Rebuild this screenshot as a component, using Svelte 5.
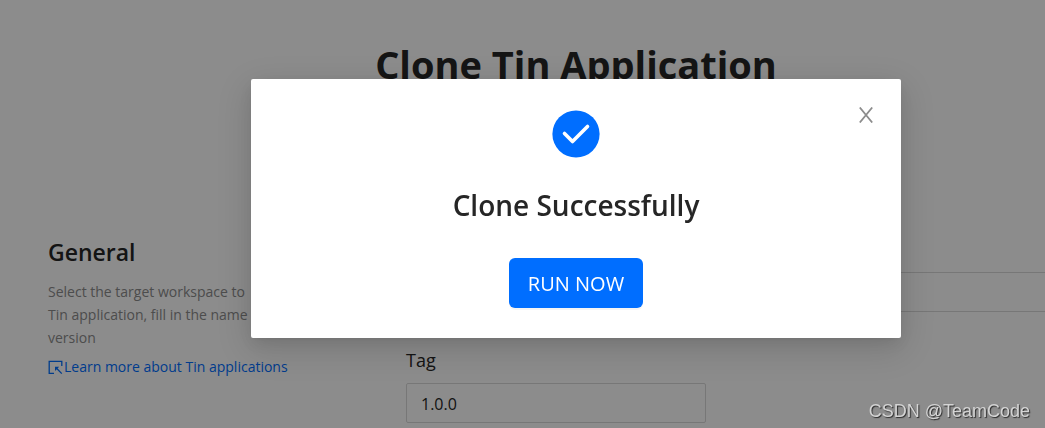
<script>
  let open = $state(true);
  let name = $state('');
  let tag = $state('1.0.0');

  const description = [
    'Select the target workspace to',
    'Tin application, fill in the name',
    'version'
  ];
</script>

<div class="page">
  <h1 class="page-title">Clone Tin Application</h1>

  <div class="section">
    <div class="intro">
      <h2 class="section-title" id="general">General</h2>
      <p class="description">
        {#each description as line}
          <span>{line}</span>
        {/each}
      </p>
      <a class="more" href="#learn-more">
        <svg width="15" height="15" viewBox="0 0 15 15" fill="none" stroke="currentColor" stroke-width="1.3">
          <path d="M6 13.3H1.2V1.3H13.8V6" />
          <path d="M13.8 13.6L8.5 8.3" />
          <path d="M7 6.8H11.2L7 11Z" fill="currentColor" stroke="none" />
        </svg>Learn more about Tin applications
      </a>
    </div>

    <form class="fields" onsubmit={(e) => e.preventDefault()}>
      <input class="wide" type="text" aria-labelledby="general" bind:value={name} />
      <label for="tag">Tag</label>
      <input id="tag" type="text" bind:value={tag} />
    </form>
  </div>
</div>

{#if open}
  <div class="mask">
    <div class="dialog" role="dialog" aria-modal="true" aria-labelledby="dialog-title">
      <button class="btn-close" onclick={() => (open = false)} aria-label="Close">
        <svg width="16" height="16" viewBox="0 0 16 16" fill="none" stroke="currentColor" stroke-width="1.8"><path d="M1.8 0.5L14.2 15.5M14.2 0.5L1.8 15.5" /></svg>
      </button>
      <svg class="check" width="48" height="48" viewBox="0 0 48 48" fill="none">
        <circle cx="24" cy="24" r="23.6" fill="#006eff" />
        <path d="M12.5 23.5L20.5 31.5L35.5 16.5" stroke="#fff" stroke-width="3.6" stroke-linecap="round" stroke-linejoin="round" />
      </svg>
      <h2 class="dialog-title" id="dialog-title">Clone Successfully</h2>
      <button class="btn-run" onclick={() => (open = false)}>RUN NOW</button>
    </div>
  </div>
{/if}

<div class="watermark">CSDN @TeamCode</div>

<style>
  :global(body) { background: #ffffff; overflow: hidden; }

  .page, .mask { font-family: 'Segoe UI', 'Open Sans', 'Noto Sans', sans-serif; color: #262626; }
  .page { height: 100vh; overflow: hidden; }
  h1, h2, p { margin: 0; }

  .page-title { padding: 36px 0 0 107px; font-size: 38px; font-weight: 700; line-height: 56px; text-align: center; }

  .section { display: grid; grid-template-columns: 310px minmax(0, 1fr); column-gap: 48px; margin-top: 142px; padding-left: 48px; }
  .section-title { font-size: 23px; font-weight: 600; line-height: 36px; }
  .description { margin-top: 10px; font-size: 14px; line-height: 23px; color: #8c8c8c; }
  .description span { display: block; white-space: nowrap; }
  .more { display: flex; align-items: center; gap: 1px; margin-top: 6px; font-size: 14px; line-height: 24px; color: #006eff; text-decoration: none; white-space: nowrap; }
  .more svg { flex-shrink: 0; }

  .fields { display: flex; flex-direction: column; align-items: flex-start; padding-top: 38px; }
  .fields label { margin-top: 32px; font-size: 18px; line-height: 32px; }
  input { width: 300px; height: 40px; box-sizing: border-box; padding: 5px 14px 3px; border: 1px solid #d9d9d9; border-radius: 2px; background: #ffffff; color: inherit; font-family: inherit; font-size: 16px; outline: none; }
  input:focus { border-color: #006eff; }
  #tag { margin-top: 7px; }
  .wide { width: calc(100% + 107px); }

  .mask { position: fixed; inset: 0; padding: 79px 37px 0 144px; background: rgba(0, 0, 0, 0.45); }
  .dialog { position: relative; display: flex; flex-direction: column; align-items: center; max-width: 650px; box-sizing: border-box; margin: 0 auto; padding: 31px 30px 30px; background: #ffffff; border-radius: 2px; box-shadow: 0 3px 6px -4px rgba(0, 0, 0, 0.12), 0 6px 16px 0 rgba(0, 0, 0, 0.08), 0 10px 36px 6px rgba(0, 0, 0, 0.12); }
  .dialog-title { margin-top: 27px; font-size: 28px; font-weight: 600; line-height: 40px; }
  .check { display: block; }

  button { border: none; font-family: inherit; cursor: pointer; }
  .btn-close { position: absolute; top: 24px; right: 23px; display: flex; align-items: center; justify-content: center; width: 24px; height: 24px; padding: 0; background: none; color: #8c8c8c; }
  .btn-close:hover { color: #262626; }
  .btn-run { height: 50px; margin-top: 33px; padding: 0 19px; border-radius: 6px; background: #006eff; color: #ffffff; font-size: 20px; box-shadow: 0 2px 0 rgba(0, 0, 0, 0.04); }
  .btn-run:hover { background: #2b86ff; }

  .watermark { position: fixed; right: 15px; bottom: 5px; font-family: 'Liberation Sans', Arial, sans-serif; font-size: 18px; line-height: 24px; color: #d4d4d4; text-shadow: 1px 1px 1px rgba(0, 0, 0, 0.7); }
</style>
